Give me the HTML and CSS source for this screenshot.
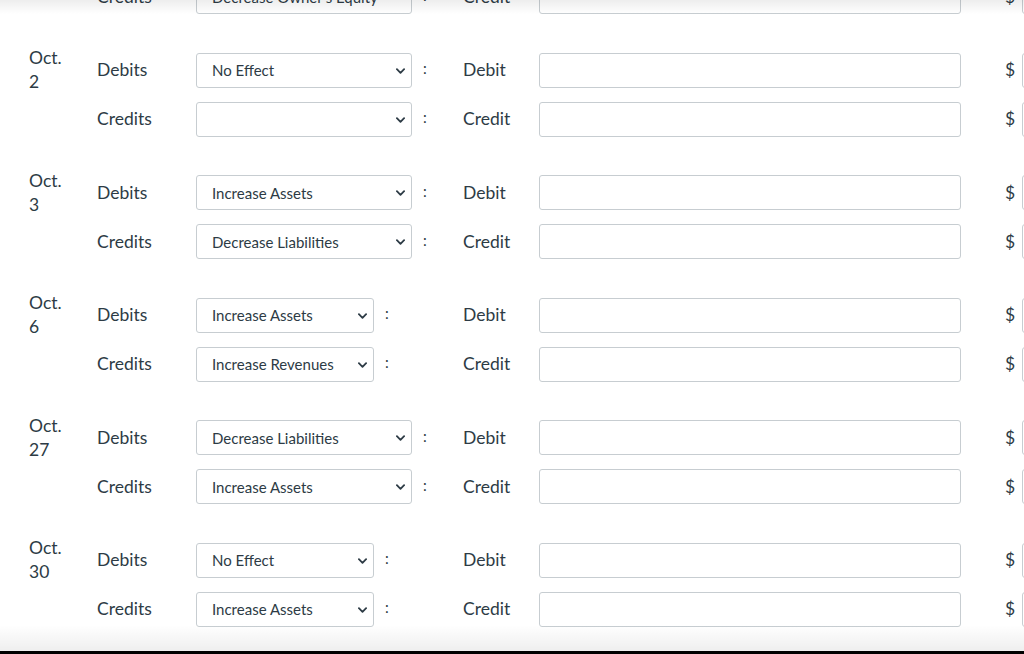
FILE: index.html
```html
<!DOCTYPE html>
<html lang="en">
<head>
<meta charset="utf-8">
<title>Journal entries</title>
<link rel="stylesheet" href="styles.css">
</head>
<body>
<div class="screen">
  <main class="entries">
    <section class="group first">
      <div class="date"></div>
      <div class="label">Credits</div>
      <div class="pick"><div class="sel wide"><select><option>Decrease Owner's Equity</option></select><svg class="chev" viewBox="0 0 10 6"><path d="M1 1l4 4 4-4"/></svg></div><span class="colon">:</span></div>
      <div class="side">Credit</div>
      <input class="amount" type="text">
      <div class="money"><span class="dollar">$</span><input class="value" type="text"></div>
    </section>

    <section class="group">
      <div class="date">Oct.<br>2</div>
      <div class="label">Debits</div>
      <div class="pick"><div class="sel wide"><select><option>No Effect</option></select><svg class="chev" viewBox="0 0 10 6"><path d="M1 1l4 4 4-4"/></svg></div><span class="colon">:</span></div>
      <div class="side">Debit</div>
      <input class="amount" type="text">
      <div class="money"><span class="dollar">$</span><input class="value" type="text"></div>

      <div class="label">Credits</div>
      <div class="pick"><div class="sel wide"><select><option></option></select><svg class="chev" viewBox="0 0 10 6"><path d="M1 1l4 4 4-4"/></svg></div><span class="colon">:</span></div>
      <div class="side">Credit</div>
      <input class="amount" type="text">
      <div class="money"><span class="dollar">$</span><input class="value" type="text"></div>
    </section>

    <section class="group">
      <div class="date">Oct.<br>3</div>
      <div class="label">Debits</div>
      <div class="pick"><div class="sel wide"><select><option>Increase Assets</option></select><svg class="chev" viewBox="0 0 10 6"><path d="M1 1l4 4 4-4"/></svg></div><span class="colon">:</span></div>
      <div class="side">Debit</div>
      <input class="amount" type="text">
      <div class="money"><span class="dollar">$</span><input class="value" type="text"></div>

      <div class="label">Credits</div>
      <div class="pick"><div class="sel wide"><select><option>Decrease Liabilities</option></select><svg class="chev" viewBox="0 0 10 6"><path d="M1 1l4 4 4-4"/></svg></div><span class="colon">:</span></div>
      <div class="side">Credit</div>
      <input class="amount" type="text">
      <div class="money"><span class="dollar">$</span><input class="value" type="text"></div>
    </section>

    <section class="group">
      <div class="date">Oct.<br>6</div>
      <div class="label">Debits</div>
      <div class="pick"><div class="sel narrow"><select><option>Increase Assets</option></select><svg class="chev" viewBox="0 0 10 6"><path d="M1 1l4 4 4-4"/></svg></div><span class="colon">:</span></div>
      <div class="side">Debit</div>
      <input class="amount" type="text">
      <div class="money"><span class="dollar">$</span><input class="value" type="text"></div>

      <div class="label">Credits</div>
      <div class="pick"><div class="sel narrow"><select><option>Increase Revenues</option></select><svg class="chev" viewBox="0 0 10 6"><path d="M1 1l4 4 4-4"/></svg></div><span class="colon">:</span></div>
      <div class="side">Credit</div>
      <input class="amount" type="text">
      <div class="money"><span class="dollar">$</span><input class="value" type="text"></div>
    </section>

    <section class="group">
      <div class="date">Oct.<br>27</div>
      <div class="label">Debits</div>
      <div class="pick"><div class="sel wide"><select><option>Decrease Liabilities</option></select><svg class="chev" viewBox="0 0 10 6"><path d="M1 1l4 4 4-4"/></svg></div><span class="colon">:</span></div>
      <div class="side">Debit</div>
      <input class="amount" type="text">
      <div class="money"><span class="dollar">$</span><input class="value" type="text"></div>

      <div class="label">Credits</div>
      <div class="pick"><div class="sel wide"><select><option>Increase Assets</option></select><svg class="chev" viewBox="0 0 10 6"><path d="M1 1l4 4 4-4"/></svg></div><span class="colon">:</span></div>
      <div class="side">Credit</div>
      <input class="amount" type="text">
      <div class="money"><span class="dollar">$</span><input class="value" type="text"></div>
    </section>

    <section class="group">
      <div class="date">Oct.<br>30</div>
      <div class="label">Debits</div>
      <div class="pick"><div class="sel narrow"><select><option>No Effect</option></select><svg class="chev" viewBox="0 0 10 6"><path d="M1 1l4 4 4-4"/></svg></div><span class="colon">:</span></div>
      <div class="side">Debit</div>
      <input class="amount" type="text">
      <div class="money"><span class="dollar">$</span><input class="value" type="text"></div>

      <div class="label">Credits</div>
      <div class="pick"><div class="sel narrow"><select><option>Increase Assets</option></select><svg class="chev" viewBox="0 0 10 6"><path d="M1 1l4 4 4-4"/></svg></div><span class="colon">:</span></div>
      <div class="side">Credit</div>
      <input class="amount" type="text">
      <div class="money"><span class="dollar">$</span><input class="value" type="text"></div>
    </section>
  </main>
  <div class="top-shade"></div>
  <div class="bottom-fade"></div>
</div>
<div class="edge"></div>
</body>
</html>
```

FILE: styles.css
```css
html, body {
  margin: 0;
  padding: 0;
  background: #fff;
  overflow: hidden;
}

body {
  width: 1024px;
  height: 654px;
  font-family: Lato, "Open Sans", sans-serif;
  color: #2d3b45;
}

.screen {
  position: relative;
  height: 651px;
  overflow: hidden;
}

.entries {
  padding-left: 29px;
  display: flex;
  flex-direction: column;
  gap: 24.5px;
}

.group {
  display: grid;
  grid-template-columns: 68px 99px 267px 76px 422px 1fr;
  grid-template-rows: 49px 49px;
  align-items: center;
  font-size: 17.5px;
}

.group.first {
  grid-template-rows: 49px;
  margin-top: -28px;
}

.date {
  grid-row: 1 / span 2;
  align-self: start;
  line-height: 24px;
  padding-top: 0.5px;
}

.group.first .date {
  grid-row: 1;
}

.label,
.side {
  line-height: 24px;
}

.pick {
  display: flex;
  align-items: center;
}

.sel {
  position: relative;
  height: 35px;
}

.sel.wide { width: 216px; }
.sel.narrow { width: 178px; }

.sel select {
  appearance: none;
  -webkit-appearance: none;
  width: 100%;
  height: 100%;
  box-sizing: border-box;
  border: 1px solid #c7cdd1;
  border-radius: 3px;
  background: #fff;
  padding: 0 26px 0 15px;
  font-family: Lato, "Open Sans", sans-serif;
  font-size: 15px;
  color: #2d3b45;
}

.chev {
  position: absolute;
  right: 7px;
  top: 15px;
  width: 9px;
  height: 6px;
  fill: none;
  stroke: #2d3b45;
  stroke-width: 2;
  stroke-linecap: round;
  stroke-linejoin: round;
  pointer-events: none;
}

.colon {
  margin-left: 11px;
  font-size: 15px;
  line-height: 1;
  margin-top: -3px;
}

.amount {
  box-sizing: border-box;
  width: 422px;
  height: 35px;
  border: 1px solid #c7cdd1;
  border-radius: 3px;
  background: #fff;
  margin: 0;
  padding: 0 8px;
}

.money {
  display: flex;
  align-items: center;
  padding-left: 44px;
}

.dollar {
  width: 17px;
  line-height: 24px;
}

.value {
  box-sizing: border-box;
  width: 100px;
  height: 35px;
  border: 1px solid #c7cdd1;
  border-radius: 3px;
  margin: 0;
  flex: none;
}

.top-shade {
  position: absolute;
  left: 0;
  top: 0;
  width: 100%;
  height: 14px;
  background: linear-gradient(rgba(0, 0, 0, 0.07), rgba(0, 0, 0, 0));
  pointer-events: none;
}

.bottom-fade {
  position: absolute;
  left: 0;
  bottom: 0;
  width: 100%;
  height: 26px;
  background: linear-gradient(rgba(0, 0, 0, 0), rgba(0, 0, 0, 0.065));
  pointer-events: none;
}

.edge {
  height: 3px;
  background: #000;
}
```
